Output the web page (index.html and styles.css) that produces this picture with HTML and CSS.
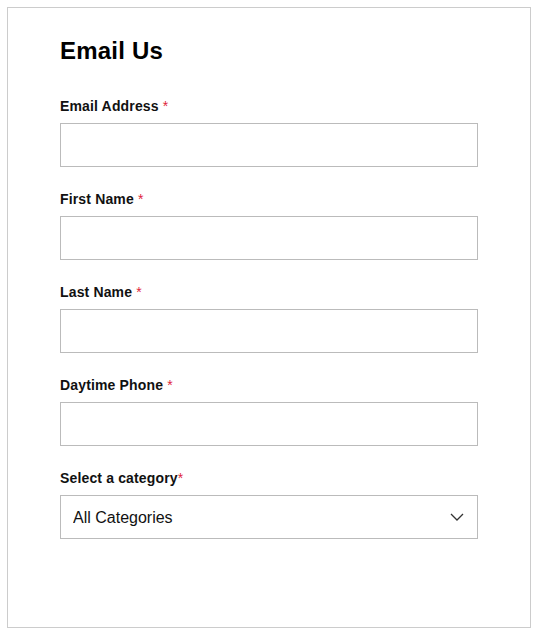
FILE: index.html
```html
<!DOCTYPE html>
<html>
<head>
<meta charset="utf-8">
<link rel="stylesheet" href="styles.css">
</head>
<body>
<div class="card">
  <h1 class="title">Email Us</h1>
  <div class="field">
    <label class="label">Email Address <span class="req">*</span></label>
    <input class="input" type="text">
  </div>
  <div class="field">
    <label class="label">First Name <span class="req">*</span></label>
    <input class="input" type="text">
  </div>
  <div class="field">
    <label class="label">Last Name <span class="req">*</span></label>
    <input class="input" type="text">
  </div>
  <div class="field">
    <label class="label">Daytime Phone <span class="req">*</span></label>
    <input class="input" type="text">
  </div>
  <div class="field">
    <label class="label">Select a category<span class="req">*</span></label>
    <div class="select-wrap">
      <select class="select"><option>All Categories</option></select>
      <svg class="chev" width="14" height="8" viewBox="0 0 14 8"><path d="M1 1 L7 7 L13 1" fill="none" stroke="#333" stroke-width="1.3"/></svg>
    </div>
  </div>
</div>
</body>
</html>
```
FILE: styles.css
```css
html, body { margin: 0; padding: 0; background: #fff; }
body { padding: 7px; font-family: "Liberation Sans", Arial, sans-serif; color: #000; }
.card {
  box-sizing: border-box;
  width: 524px;
  height: 621px;
  border: 1px solid #ccc;
  padding: 29px 52px 0;
}
.title { margin: 0 0 33px; font-size: 24px; line-height: 28px; font-weight: bold; letter-spacing: 0.2px; }
.field { display: flex; flex-direction: column; margin-bottom: 24px; }
.label { font-size: 14px; line-height: 17px; font-weight: bold; margin-bottom: 8px; color: #111; letter-spacing: 0.15px; }
.req { color: #e0243c; font-weight: normal; }
.input, .select {
  box-sizing: border-box;
  width: 418px;
  height: 44px;
  border: 1px solid #bbb;
  border-radius: 0;
  background: #fff;
  margin: 0;
  outline: none;
}
.select-wrap { position: relative; width: 418px; }
.select {
  appearance: none;
  -webkit-appearance: none;
  font-family: "Liberation Sans", Arial, sans-serif;
  font-size: 16px;
  color: #111;
  padding: 0 12px;
}
.chev { position: absolute; right: 14px; top: 18px; pointer-events: none; }
```
